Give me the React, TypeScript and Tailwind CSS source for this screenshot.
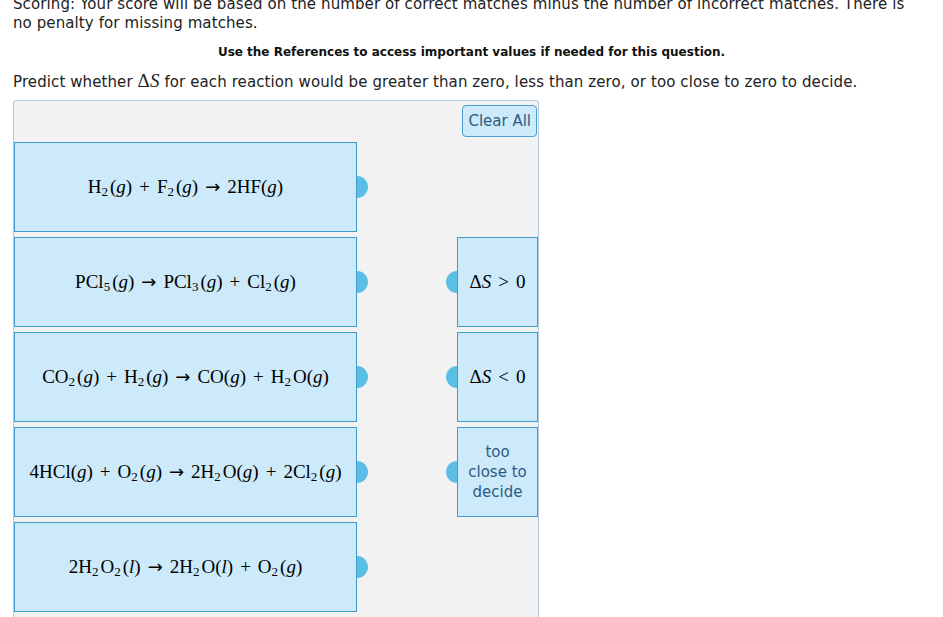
import type { ReactNode } from 'react'

const sans = { fontFamily: '"DejaVu Sans", Verdana, sans-serif' }
const serif = { fontFamily: '"Liberation Serif", "DejaVu Serif", serif' }
const arrowFont = { fontFamily: '"DejaVu Sans", sans-serif' }

// italic variable like g, l, S
function V({ children }: { children: ReactNode }) {
  return <i className="italic">{children}</i>
}

function Sub({ children }: { children: ReactNode }) {
  return <sub className="text-[13px] relative top-[3px] mr-[2px] align-baseline">{children}</sub>
}

function Phase({ p }: { p: string }) {
  return (
    <span>
      (<V>{p}</V>)
    </span>
  )
}

const Op = ({ s }: { s: string }) =>
  s === '→' ? (
    <span className="mx-[7px] text-[18px]" style={arrowFont}>
      {s}
    </span>
  ) : (
    <span className="mx-[7px]">{s}</span>
  )

const reactions: ReactNode[] = [
  <>
    H<Sub>2</Sub>
    <Phase p="g" />
    <Op s="+" />F<Sub>2</Sub>
    <Phase p="g" />
    <Op s="→" />2HF<Phase p="g" />
  </>,
  <>
    PCl<Sub>5</Sub>
    <Phase p="g" />
    <Op s="→" />PCl<Sub>3</Sub>
    <Phase p="g" />
    <Op s="+" />Cl<Sub>2</Sub>
    <Phase p="g" />
  </>,
  <>
    CO<Sub>2</Sub>
    <Phase p="g" />
    <Op s="+" />H<Sub>2</Sub>
    <Phase p="g" />
    <Op s="→" />CO<Phase p="g" />
    <Op s="+" />H<Sub>2</Sub>O<Phase p="g" />
  </>,
  <>
    4HCl<Phase p="g" />
    <Op s="+" />O<Sub>2</Sub>
    <Phase p="g" />
    <Op s="→" />2H<Sub>2</Sub>O<Phase p="g" />
    <Op s="+" />2Cl<Sub>2</Sub>
    <Phase p="g" />
  </>,
  <>
    2H<Sub>2</Sub>O<Sub>2</Sub>
    <Phase p="l" />
    <Op s="→" />2H<Sub>2</Sub>O<Phase p="l" />
    <Op s="+" />O<Sub>2</Sub>
    <Phase p="g" />
  </>,
]

function LeftCard({ children }: { children: ReactNode }) {
  return (
    <div className="relative h-[90px] w-[343px]">
      <div className="absolute left-[332px] top-[34px] h-[22px] w-[22px] rounded-full bg-[#5bbfe5]" />
      <div
        className="relative flex h-full w-full items-center justify-center border border-[#3f9bcb] bg-[#cceaf9] text-[19px] text-black"
        style={serif}
      >
        <span className="whitespace-nowrap">{children}</span>
      </div>
    </div>
  )
}

function RightCard({ children }: { children: ReactNode }) {
  return (
    <div className="relative h-[90px] w-[81px]">
      <div className="absolute left-[-11px] top-[34px] h-[22px] w-[22px] rounded-full bg-[#5bbfe5]" />
      <div className="relative flex h-full w-full items-center justify-center border border-[#3f9bcb] bg-[#cceaf9] text-center">
        {children}
      </div>
    </div>
  )
}

export default function App() {
  return (
    <div className="h-[617px] w-[943px] overflow-hidden bg-white pl-[13px] text-[#333]" style={sans}>
      <p className="mt-[-5px] text-[15px] leading-[19px] tracking-[0.1px] text-[#222]">
        Scoring: Your score will be based on the number of correct matches minus the number of incorrect matches. There is
        <br />
        no penalty for missing matches.
      </p>

      <p className="mt-[11px] pr-[13px] text-center text-[12px] font-bold leading-[16px] text-[#111]">
        Use the References to access important values if needed for this question.
      </p>

      <p className="mt-[11px] text-[15px] leading-[19px] tracking-[0.1px] text-[#222]">
        Predict whether{' '}
        <span className="text-[19px]" style={serif}>
          Δ<V>S</V>
        </span>{' '}
        for each reaction would be greater than zero, less than zero, or too close to zero to decide.
      </p>

      <div className="mt-[8px] h-[520px] w-[526px] rounded-[3px] border border-[#b6cade] bg-[#f2f2f2] pt-[4px]">
        <div className="flex justify-end pr-[1px]">
          <button className="h-[32px] rounded-[4px] border border-[#4a9fd1] bg-[#cceaf9] px-[5px] text-[15px] text-[#2e5a85]">
            Clear All
          </button>
        </div>

        <div className="mt-[5px] flex justify-between">
          <div className="flex flex-col gap-[5px]">
            {reactions.map((r, i) => (
              <LeftCard key={i}>{r}</LeftCard>
            ))}
          </div>

          <div className="mt-[95px] flex flex-col gap-[5px]">
            <RightCard>
              <span className="text-[19px] text-black" style={serif}>
                Δ<V>S</V>
                <Op s=">" />0
              </span>
            </RightCard>
            <RightCard>
              <span className="text-[19px] text-black" style={serif}>
                Δ<V>S</V>
                <Op s="<" />0
              </span>
            </RightCard>
            <RightCard>
              <span className="text-[15px] leading-[20px] text-[#2e5a85]">
                too
                <br />
                close to
                <br />
                decide
              </span>
            </RightCard>
          </div>
        </div>
      </div>
    </div>
  )
}
